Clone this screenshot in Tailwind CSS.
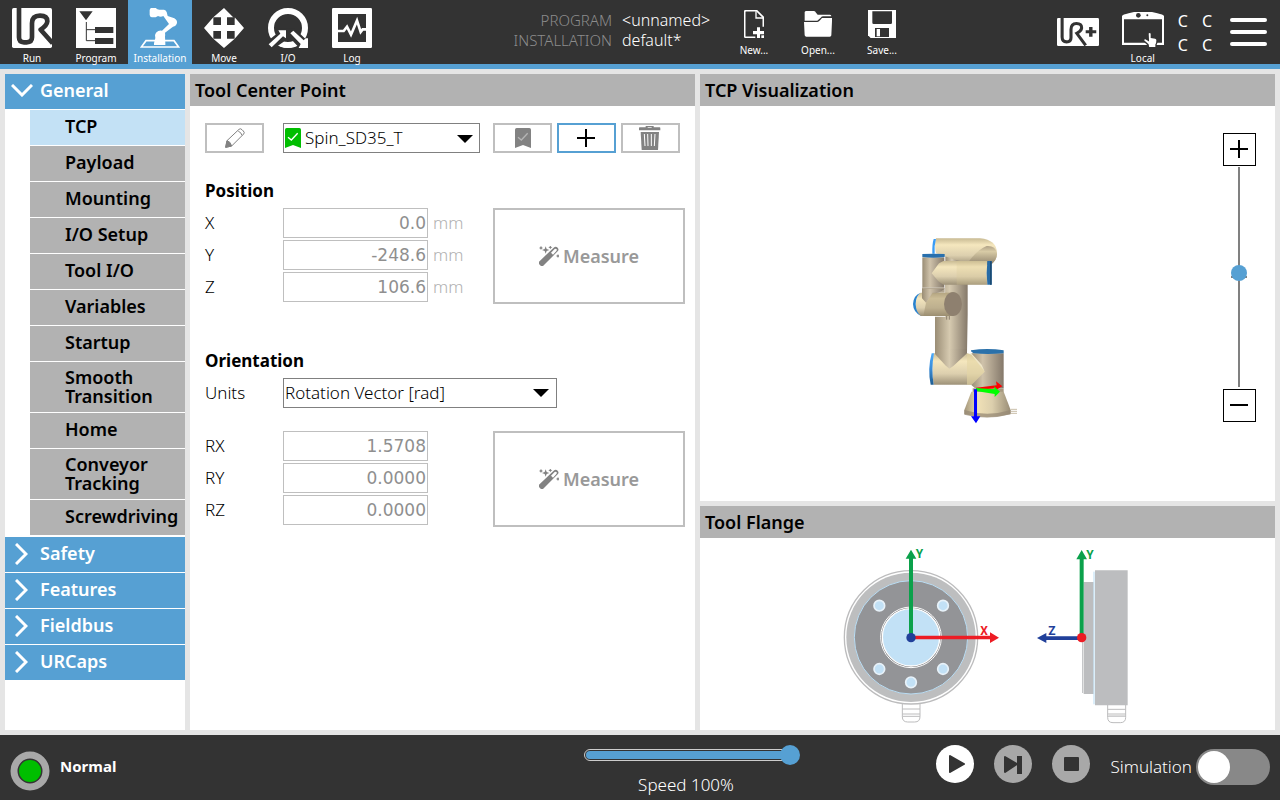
<!DOCTYPE html>
<html lang="en">

<head>
    <meta charset="utf-8">
    <meta name="viewport" content="width=device-width, initial-scale=1.0">
    <script src="https://cdn.jsdelivr.net/npm/@tailwindcss/browser@4"></script>
    <title>Installation - Tool Center Point</title>
</head>

<body class="flex min-h-screen flex-col bg-[#e5e5e5] font-['Noto_Sans','DejaVu_Sans',sans-serif] text-black">

    <!-- shared symbols -->
    <svg class="hidden">
        <symbol id="ur" viewBox="0 0 120 120">
            <rect width="120" height="120" rx="5" fill="#fff"/>
            <path d="M21 -1V88Q21 103 36 103H44Q60 103 60 88V46Q60 23 84 23Q106 23 106 40Q105 52 86 65L122 106" fill="none" stroke="#333" stroke-width="14" stroke-linejoin="round"/>
        </symbol>
        <symbol id="bookmark" viewBox="0 0 48 60">
            <path d="M5 0H43Q48 0 48 5V60L24 51L0 60V5Q0 0 5 0Z" fill="currentColor" stroke="none"/>
            <path d="M9 28L19 36L38 16" fill="none" stroke-width="4"/>
        </symbol>
        <symbol id="wand" viewBox="0 0 60 60">
            <path d="M0 47L44 5Q50 -1 56 5Q61 11 56 16L12 60Q6 62 2 56Q-2 52 0 47Z" fill="#828282"/>
            <path d="M36 20L47 9Q50 7 53 10Q55 12 52 15L42 26Z" fill="#fff"/>
            <path d="M20 1L23 9L31 12L23 15L20 23L17 15L9 12L17 9ZM6 -1L8 4L12 6L8 8L6 12L4 8L0 6L4 4ZM34 -2L36 2L40 4L36 6L34 10L32 6L28 4L32 2ZM57 24L59 28L62 30L59 32L57 36L55 32L51 30L55 28Z" fill="#828282"/>
        </symbol>
        <symbol id="arrow" viewBox="0 0 16 8"><path d="M0 0H16L8 8Z"/></symbol>
    </svg>

    <header class="flex h-[69px] shrink-0 border-b-[5px] border-[#56a0d3] bg-[#333] text-white">
        <nav class="flex text-[10px] leading-3">
            <button class="flex w-16 flex-col items-center pt-2">
                <svg class="size-10"><use href="#ur"/></svg>
                <span class="mt-1">Run</span>
            </button>
            <button class="flex w-16 flex-col items-center pt-2">
                <svg class="size-10" viewBox="0 0 120 120">
                    <path d="M0 0H120V120H0Z" fill="#fff"/>
                    <path d="M10 10H50L30 37Z M57 57H112V75H57Z M57 90H112V108H57Z" fill="#333"/>
                    <path d="M31 42V98H57M31 65H57" fill="none" stroke="#333" stroke-width="3"/>
                </svg>
                <span class="mt-1">Program</span>
            </button>
            <button class="flex w-16 flex-col items-center bg-[#56a0d3] pt-2">
                <svg class="size-10" viewBox="0 0 120 120">
                    <path d="M18 98H102L116 117H4Z" fill="none" stroke="#fff" stroke-width="5"/>
                    <path d="M34 0H47Q52 5 58 5H72Q78 6 80 12L83 24L103 31Q112 36 111 45Q109 54 99 56L75 74Q76 80 75 86L76 106V111H42V106L46 90Q42 82 48 74Q56 66 66 68L87 48L70 24Q62 28 54 24L47 28H35Q29 26 29 20V6Q30 0 34 0Z" fill="#fff"/>
                </svg>
                <span class="mt-1">Installation</span>
            </button>
            <button class="flex w-16 flex-col items-center pt-2">
                <svg class="size-10" viewBox="0 0 120 120">
                    <path d="M60 0L92 32V28L120 60L92 92L60 120L28 92L0 60L28 28Z" fill="#fff"/>
                    <path d="M28 28H51V51H28ZM69 28H92V51H69ZM28 69H51V92H28ZM69 69H92V92H69Z" fill="#333"/>
                </svg>
                <span class="mt-1">Move</span>
            </button>
            <button class="flex w-16 flex-col items-center pt-2">
                <svg class="size-10" viewBox="0 0 120 120">
                    <circle cx="60" cy="60" r="51" fill="none" stroke="#fff" stroke-width="18"/>
                    <path d="M0 98L28 76L24 62H60V92L20 120H0ZM58 62H80L112 92H120V120H94L64 88Z" fill="#333"/>
                    <path d="M2 109L37 77L31 67H54V91L45 85L11 118ZM67 76L76 68L107 97L113 91H120V120H92L98 108Z" fill="#fff"/>
                    <path d="M60 106L76 110L70 119H50L36 115L48 106Z" fill="#fff"/>
                </svg>
                <span class="mt-1">I/O</span>
            </button>
            <button class="flex w-16 flex-col items-center pt-2">
                <svg class="size-10" viewBox="0 0 120 120">
                    <rect width="120" height="120" rx="4" fill="#fff"/>
                    <path d="M18 18H102V102H18Z" fill="#333"/>
                    <path d="M16 69H35L45 56L57 80L75 38L86 72L92 64H104" fill="none" stroke="#fff" stroke-width="8"/>
                </svg>
                <span class="mt-1">Log</span>
            </button>
        </nav>

        <dl class="ml-[128px] grid grid-cols-[100px_90px] content-start gap-x-[10px] pt-[10px] text-base leading-5 font-light">
            <dt class="text-right text-[15px] leading-5 text-[#8c8c8c]">PROGRAM</dt>
            <dd>&lt;unnamed&gt;</dd>
            <dt class="text-right text-[15px] leading-5 text-[#8c8c8c]">INSTALLATION</dt>
            <dd>default*</dd>
        </dl>

        <div class="ml-[10px] flex text-[10px] leading-3">
            <button class="flex w-16 flex-col items-center pt-[10px]">
                <svg class="h-7 w-5" viewBox="0 0 60 84">
                    <path d="M34 82H5Q2 82 2 78V6Q2 2 6 2H38L58 22V50" fill="none" stroke="#fff" stroke-width="5"/>
                    <path d="M36 4V24H57" fill="none" stroke="#fff" stroke-width="4"/>
                    <path d="M39 52H48V63H60V73H48V84H39V73H27V63H39Z" fill="#fff"/>
                    <path d="M52 76H60V84H52Z" fill="#fff"/>
                </svg>
                <span class="mt-[6px]">New...</span>
            </button>
            <button class="flex w-16 flex-col items-center pt-[10px]">
                <svg class="h-7 w-7" viewBox="0 0 84 84">
                    <path d="M2 6Q3 3 7 3H30Q34 3 36 8L41 14H78Q82 14 82 19H58Q53 19 50 23L40 32H2Z" fill="#fff"/>
                    <path d="M0 36H40Q44 36 48 31L54 24H84V34L82 76Q82 80 77 80H7Q3 80 2 76Z" fill="#fff"/>
                </svg>
                <span class="mt-[6px]">Open...</span>
            </button>
            <button class="flex w-16 flex-col items-center pt-[10px]">
                <svg class="h-7 w-7" viewBox="0 0 84 84">
                    <path d="M0 0H84V84H8L0 76Z" fill="#fff"/>
                    <path d="M13 4H72V38Q72 42 68 42H17Q13 42 13 38ZM21 54H63V81H21Z" fill="#333"/>
                    <path d="M26 57H36V79H26Z" fill="#fff"/>
                </svg>
                <span class="mt-[6px]">Save...</span>
            </button>
        </div>

        <div class="ml-auto flex text-[10px] leading-3">
            <button class="mr-3 pt-[18px] pb-[18px]" aria-label="UR+">
                <svg class="h-7 w-[42px]" viewBox="0 0 123 82">
                    <rect width="123" height="82" rx="4" fill="#fff"/>
                    <path d="M15 -1V56Q15 70 28 70Q41 70 41 58V34Q41 16 57 16Q73 16 72 30Q71 38 58 45L84 80" fill="none" stroke="#333" stroke-width="9"/>
                    <path d="M94 26H104V36H115V45H104V55H94V45H84V36H94Z" fill="#333"/>
                </svg>
            </button>
            <button class="flex w-16 flex-col items-center pt-3">
                <svg class="h-9 w-[42px]" viewBox="0 0 126 108">
                    <path d="M0 12Q2 8 20 4L36 0H90L106 4Q124 8 126 12V99H0Z" fill="#fff"/>
                    <path d="M6 22H120V92H6Z" fill="#333"/>
                    <circle cx="49" cy="10" r="7" fill="#333"/><circle cx="76" cy="10" r="3" fill="#333"/>
                    <path d="M78 64Q82 58 88 64V76L100 78Q106 80 105 86Q105 94 102 98V107H80L78 98L65 86Q64 79 71 80L79 85Z" fill="#fff" stroke="#333" stroke-width="4"/>
                </svg>
                <span class="mt-1">Local</span>
            </button>
            <div class="ml-[3px] grid grid-cols-2 content-start gap-x-[14px] pt-[9px] text-base leading-6">
                <span>C</span><span>C</span><span>C</span><span>C</span>
            </div>
            <button class="mr-[13px] ml-[18px] flex flex-col gap-2 self-start pt-[18px]" aria-label="Menu">
                <span class="h-1 w-[37px] rounded-sm bg-white"></span>
                <span class="h-1 w-[37px] rounded-sm bg-white"></span>
                <span class="h-1 w-[37px] rounded-sm bg-white"></span>
            </button>
        </div>
    </header>

    <div class="flex grow gap-[5px] p-[5px]">
        <!-- menu -->
        <aside class="flex w-[180px] shrink-0 flex-col bg-white text-lg leading-[19px] font-semibold">
            <button class="flex h-[35px] items-center bg-[#56a0d3] pb-[2px] pl-[6px] text-left text-white">
                <svg class="mr-[7px] h-[13px] w-[22px]" viewBox="0 0 22 13"><path d="M1 1L11 11L21 1" fill="none" stroke="#fff" stroke-width="3"/></svg>General
            </button>
            <ul class="mt-px mb-[2px] ml-[25px] flex flex-col gap-px text-black">
                <li><a href="#" class="flex h-[35px] items-center bg-[#c3e1f5] pb-[2px] pl-[35px]">TCP</a></li>
                <li><a href="#" class="flex h-[35px] items-center bg-[#b2b2b2] pb-[2px] pl-[35px]">Payload</a></li>
                <li><a href="#" class="flex h-[35px] items-center bg-[#b2b2b2] pb-[2px] pl-[35px]">Mounting</a></li>
                <li><a href="#" class="flex h-[35px] items-center bg-[#b2b2b2] pb-[2px] pl-[35px]">I/O Setup</a></li>
                <li><a href="#" class="flex h-[35px] items-center bg-[#b2b2b2] pb-[2px] pl-[35px]">Tool I/O</a></li>
                <li><a href="#" class="flex h-[35px] items-center bg-[#b2b2b2] pb-[2px] pl-[35px]">Variables</a></li>
                <li><a href="#" class="flex h-[35px] items-center bg-[#b2b2b2] pb-[2px] pl-[35px]">Startup</a></li>
                <li><a href="#" class="flex h-[50px] items-center bg-[#b2b2b2] pl-[35px]">Smooth<br>Transition</a></li>
                <li><a href="#" class="flex h-[35px] items-center bg-[#b2b2b2] pb-[2px] pl-[35px]">Home</a></li>
                <li><a href="#" class="flex h-[50px] items-center bg-[#b2b2b2] pl-[35px]">Conveyor<br>Tracking</a></li>
                <li><a href="#" class="flex h-[35px] items-center bg-[#b2b2b2] pb-[2px] pl-[35px]">Screwdriving</a></li>
            </ul>
            <div class="flex flex-col gap-px text-white">
                <button class="flex h-[35px] items-center bg-[#56a0d3] pb-[2px] pl-[10px] text-left">
                    <svg class="mr-3 h-[22px] w-[13px]" viewBox="0 0 13 22"><path d="M1 1L11 11L1 21" fill="none" stroke="#fff" stroke-width="3"/></svg>Safety
                </button>
                <button class="flex h-[35px] items-center bg-[#56a0d3] pb-[2px] pl-[10px] text-left">
                    <svg class="mr-3 h-[22px] w-[13px]" viewBox="0 0 13 22"><path d="M1 1L11 11L1 21" fill="none" stroke="#fff" stroke-width="3"/></svg>Features
                </button>
                <button class="flex h-[35px] items-center bg-[#56a0d3] pb-[2px] pl-[10px] text-left">
                    <svg class="mr-3 h-[22px] w-[13px]" viewBox="0 0 13 22"><path d="M1 1L11 11L1 21" fill="none" stroke="#fff" stroke-width="3"/></svg>Fieldbus
                </button>
                <button class="flex h-[35px] items-center bg-[#56a0d3] pb-[2px] pl-[10px] text-left">
                    <svg class="mr-3 h-[22px] w-[13px]" viewBox="0 0 13 22"><path d="M1 1L11 11L1 21" fill="none" stroke="#fff" stroke-width="3"/></svg>URCaps
                </button>
            </div>
        </aside>

        <!-- tool center point -->
        <main class="w-[505px] shrink-0 bg-white">
            <h1 class="bg-[#b2b2b2] pl-[5px] text-lg leading-8 font-semibold">Tool Center Point</h1>
            <div class="pt-[17px] pr-[10px] pl-[15px] text-[17px] font-light">
                <div class="flex h-[30px]">
                    <button class="flex w-[59px] items-center justify-center border-2 border-[#bfbfbf]" aria-label="Rename" disabled>
                        <svg class="size-5" viewBox="0 0 60 60" fill="none" stroke="#828282" stroke-width="3">
                            <path d="M6 38L42 4Q46 0 51 5L55 9Q60 14 56 18L20 54L2 58Z"/>
                            <path d="M6 38Q16 40 20 54L2 58Z" fill="#828282"/>
                            <path d="M40 10Q48 12 51 22"/>
                        </svg>
                    </button>
                    <div class="relative ml-[19px] w-[197px]">
                        <select class="h-full w-full appearance-none border border-[#808080] bg-white pl-[21px]" aria-label="TCP">
                            <option>Spin_SD35_T</option>
                        </select>
                        <svg class="pointer-events-none absolute top-[5px] left-[2px] h-5 w-4 stroke-white text-[#00be00]"><use href="#bookmark"/></svg>
                        <svg class="pointer-events-none absolute top-3 right-[7px] h-2 w-4"><use href="#arrow"/></svg>
                    </div>
                    <div class="ml-[13px] flex gap-[5px]">
                        <button class="flex w-[59px] items-center justify-center border-2 border-[#bfbfbf]" aria-label="Set as default" disabled>
                            <svg class="h-5 w-4 stroke-[#b5b5b5] text-[#828282]"><use href="#bookmark"/></svg>
                        </button>
                        <button class="flex w-[59px] items-center justify-center border-2 border-[#56a0d3] pr-px" aria-label="Add">
                            <svg class="size-[18px]" viewBox="0 0 18 18"><path d="M8 0H10V8H18V10H10V18H8V10H0V8H8Z"/></svg>
                        </button>
                        <button class="flex w-[59px] items-center justify-center border-2 border-[#bfbfbf] pr-px" aria-label="Delete" disabled>
                            <svg class="h-6 w-[22px]" viewBox="0 0 66 72">
                                <path d="M2 4H20V0H44V4H62Q64 4 64 7V13H0V7Q0 4 2 4Z" fill="#828282"/>
                                <path d="M26 3H38V5H26Z" fill="#fff"/>
                                <path d="M5 18H60L57 72H8Z" fill="#828282"/>
                                <path d="M16 24L18 60M26 24L27 60M37 24V60M48 24L46 60" stroke="#fff" stroke-width="3"/>
                            </svg>
                        </button>
                    </div>
                </div>

                <h2 class="mt-[26px] text-[17px] leading-6 font-bold">Position</h2>
                <div class="mt-[5px] flex">
                    <div class="grid w-[288px] grid-cols-[78px_145px_auto] content-start items-center gap-y-[2px]">
                        <label for="x">X</label>
                        <input id="x" class="h-[30px] w-full border border-[#bfbfbf] pr-px text-right font-['DejaVu_Sans'] font-normal text-[#8f8f8f]" value="0.0" disabled>
                        <span class="pl-[5px] text-[#b0b0b0]">mm</span>
                        <label for="y">Y</label>
                        <input id="y" class="h-[30px] w-full border border-[#bfbfbf] pr-px text-right font-['DejaVu_Sans'] font-normal text-[#8f8f8f]" value="-248.6" disabled>
                        <span class="pl-[5px] text-[#b0b0b0]">mm</span>
                        <label for="z">Z</label>
                        <input id="z" class="h-[30px] w-full border border-[#bfbfbf] pr-px text-right font-['DejaVu_Sans'] font-normal text-[#8f8f8f]" value="106.6" disabled>
                        <span class="pl-[5px] text-[#b0b0b0]">mm</span>
                    </div>
                    <button class="flex h-24 w-[192px] shrink-0 items-center justify-center gap-1 border-2 border-[#bfbfbf] text-lg font-semibold text-[#999]" disabled>
                        <svg class="size-5 overflow-visible"><use href="#wand"/></svg>Measure
                    </button>
                </div>

                <h2 class="mt-[45px] text-[17px] leading-6 font-bold">Orientation</h2>
                <div class="mt-[5px] flex items-center">
                    <label for="units" class="w-[78px]">Units</label>
                    <div class="relative h-[30px] w-[274px]">
                        <select id="units" class="h-full w-full appearance-none border border-[#808080] bg-white pl-px">
                            <option>Rotation Vector [rad]</option>
                        </select>
                        <svg class="pointer-events-none absolute top-[11px] right-2 h-2 w-4"><use href="#arrow"/></svg>
                    </div>
                </div>
                <div class="mt-[23px] flex">
                    <div class="grid w-[288px] grid-cols-[78px_145px] content-start items-center gap-y-[2px]">
                        <label for="rx">RX</label>
                        <input id="rx" class="h-[30px] w-full border border-[#bfbfbf] pr-px text-right font-['DejaVu_Sans'] font-normal text-[#8f8f8f]" value="1.5708" disabled>
                        <label for="ry">RY</label>
                        <input id="ry" class="h-[30px] w-full border border-[#bfbfbf] pr-px text-right font-['DejaVu_Sans'] font-normal text-[#8f8f8f]" value="0.0000" disabled>
                        <label for="rz">RZ</label>
                        <input id="rz" class="h-[30px] w-full border border-[#bfbfbf] pr-px text-right font-['DejaVu_Sans'] font-normal text-[#8f8f8f]" value="0.0000" disabled>
                    </div>
                    <button class="flex h-24 w-[192px] shrink-0 items-center justify-center gap-1 border-2 border-[#bfbfbf] text-lg font-semibold text-[#999]" disabled>
                        <svg class="size-5 overflow-visible"><use href="#wand"/></svg>Measure
                    </button>
                </div>
            </div>
        </main>

        <div class="flex grow flex-col gap-[5px]">
            <section class="flex grow flex-col bg-white">
                <h2 class="bg-[#b2b2b2] pl-[5px] text-lg leading-8 font-semibold">TCP Visualization</h2>
                <div class="flex grow justify-between pr-[19px] pl-[190px]">
                    <!-- robot arm -->
                    <svg class="mt-[114px] h-[220px] w-[150px]" viewBox="0 0 450 660">
                        <defs>
                            <linearGradient id="h"><stop offset="0" stop-color="#9a8d75"/><stop offset=".45" stop-color="#d6cab0"/><stop offset="1" stop-color="#85796a"/></linearGradient>
                            <linearGradient id="hd"><stop offset="0" stop-color="#9a8d75"/><stop offset=".35" stop-color="#cfc2aa"/><stop offset="1" stop-color="#84786a"/></linearGradient>
                            <linearGradient id="v" x2="0" y2="1"><stop offset="0" stop-color="#c9bb94"/><stop offset=".25" stop-color="#f5e7be"/><stop offset=".65" stop-color="#dccfae"/><stop offset="1" stop-color="#9d9178"/></linearGradient>
                            <linearGradient id="vd" x2="0" y2="1"><stop offset="0" stop-color="#b0a186"/><stop offset=".3" stop-color="#d8cba6"/><stop offset="1" stop-color="#8f826c"/></linearGradient>
                            <linearGradient id="bl" x2="0" y2="1"><stop offset="0" stop-color="#49a9fa"/><stop offset=".5" stop-color="#3a8bd6"/><stop offset="1" stop-color="#1d5c90"/></linearGradient>
                            <linearGradient id="base"><stop offset="0" stop-color="#a3967b"/><stop offset=".3" stop-color="#efe0b6"/><stop offset=".6" stop-color="#dccfad"/><stop offset="1" stop-color="#998d76"/></linearGradient>
                        </defs>
                        <path d="M166 95H210V200H166Z" fill="url(#h)"/>
                        <path d="M165 185H233V285L231 400H135V290H166Z" fill="url(#h)"/>
                        <path d="M138 55H270Q321 60 321 100Q321 124 300 134L205 122L138 100Q132 76 138 55Z" fill="url(#v)"/>
                        <path d="M238 122Q262 90 290 78Q316 76 321 100Q321 124 300 134H238Z" fill="url(#vd)"/>
                        <path d="M131 57H138Q132 77 134 101H127Q126 73 131 57Z" fill="#3a9cf5"/>
                        <path d="M97 112H163V203H97Z" fill="url(#hd)"/>
                        <path d="M97 102Q130 100 164 102V111Q130 115 97 111Z" fill="#286fad"/>
                        <path d="M125 160L147 130L160 123H292Q288 158 292 194H160L145 184Z" fill="url(#v)"/>
                        <path d="M200 123H292Q288 158 292 194H200Z" fill="#d6c693" opacity=".25"/>
                        <path d="M292 123H305V194H292Q288 158 292 123Z" fill="#286ba5"/><path d="M300 124H305V194H300Z" fill="#1b4b73"/>
                        <path d="M96 203H164V218H96Z" fill="#b1a58f"/>
                        <path d="M92 218H190V288H92Q76 278 77 252Q78 227 92 218Z" fill="url(#v)"/>
                        <path d="M96 206H164Q148 220 128 220L108 248L96 235Z" fill="url(#hd)"/>
                        <path d="M108 248L128 218H190V288H100Z" fill="#9a8968" opacity=".45"/>
                        <path d="M92 218Q77 228 77 252Q78 278 93 287Q70 278 69 252Q70 226 92 218Z" fill="#2a82cc"/>
                        <ellipse cx="189" cy="252" rx="27" ry="36" fill="#8e806f"/>
                        <path d="M170 288V299M178 288V299" stroke="#8c806e" stroke-width="3"/>
                        <path d="M131 400H232L245 405L285 455L245 494H131Q123 447 131 400Z" fill="url(#v)"/>
                        <path d="M135 387H231V400L190 438L178 446L166 436L135 402Z" fill="url(#h)"/>
                        <path d="M125 400H132Q123 447 131 494H122Q112 447 125 400Z" fill="url(#bl)"/>
                        <path d="M231 401L262 400L290 455L262 494H231Z" fill="#e5d5a4" opacity=".6"/>
                        <path d="M244 400H341V505H255L244 495L284 455L275 434Z" fill="url(#hd)"/>
                        <path d="M243 391Q292 383 341 391V400Q292 404 250 400L243 394Z" fill="#2b71aa"/>
                        <path d="M248 505H341V517H248Z" fill="#a5987f"/>
                        <path d="M244 515H341L362 570V582Q292 602 223 582V570Z" fill="url(#base)"/>
                        <path d="M223 570Q292 592 362 570V583Q292 602 223 584Z" fill="#978a75" opacity=".75"/>
                        <path d="M362 568H381M362 574H381M362 580H381" stroke="#c9bfa9" stroke-width="3"/>
                        <path d="M258 503L320 496L318 484L337 499L318 510V505L258 510Z" fill="#f00"/>
                        <path d="M258 504L314 508L312 499L330 515L314 531V522L258 513Z" fill="#0f0"/>
                        <path d="M252 508H261V589H271L258 610L243 589H252Z" fill="#00f"/>
                    </svg>
                    <div class="mt-[27px] flex flex-col items-center self-start">
                        <button class="flex size-[33px] items-center justify-center border border-black pr-px pb-px" aria-label="Zoom in">
                            <svg class="size-[18px]" viewBox="0 0 18 18"><path d="M8 0H10V8H18V10H10V18H8V10H0V8H8Z"/></svg>
                        </button>
                        <input type="range" min="0" max="100" value="52" aria-label="Zoom" class="mt-px mr-px mb-[2px] h-[220px] w-4 appearance-none bg-[linear-gradient(#808080,#808080),linear-gradient(#808080,#808080)] bg-[length:2px_100%,16px_2px] bg-center bg-no-repeat [direction:rtl] [writing-mode:vertical-lr] [&::-webkit-slider-thumb]:size-4 [&::-webkit-slider-thumb]:appearance-none [&::-webkit-slider-thumb]:rounded-full [&::-webkit-slider-thumb]:bg-[#56a0d3]">
                        <button class="flex size-[33px] items-center justify-center border border-black pr-px pb-px" aria-label="Zoom out">
                            <svg class="h-[2px] w-[18px]" viewBox="0 0 18 2"><path d="M0 0H18V2H0Z"/></svg>
                        </button>
                    </div>
                </div>
            </section>

            <section class="bg-white">
                <h2 class="bg-[#b2b2b2] pl-[5px] text-lg leading-8 font-semibold">Tool Flange</h2>
                <div class="flex h-48 justify-center pt-[2px]">
                    <svg class="h-[190px] w-[310px]" viewBox="9 0 930 570">
                        <path d="M217 490H270V530Q270 546 254 546H233Q217 546 217 530ZM833 493H887V532Q887 548 871 548H849Q833 548 833 532Z" fill="#fff" stroke="#bcbcbd" stroke-width="3"/>
                        <path d="M217 507H270M217 522H270M217 529H270M833 508H887M833 522H887M833 529H887" stroke="#bcbcbd" stroke-width="3"/>
                        <path d="M835 522H885V529H835Z" fill="#ddd"/>
                        <circle cx="243" cy="292" r="200" fill="#fff" stroke="#bcbcbd" stroke-width="4"/>
                        <circle cx="243" cy="292" r="194" fill="#bdbebf"/>
                        <circle cx="243" cy="292" r="170" fill="#939497" stroke="#b9ddf4" stroke-width="3"/>
                        <circle cx="243" cy="292" r="91" fill="#808184" stroke="#fff" stroke-width="3"/>
                        <circle cx="243" cy="292" r="86" fill="#c2e1f6" stroke="#fff" stroke-width="4"/>
                        <g fill="#c2e1f6" stroke="#e8f2f9" stroke-width="5">
                            <circle cx="148" cy="197" r="16"/><circle cx="339" cy="197" r="16"/>
                            <circle cx="148" cy="387" r="16"/><circle cx="339" cy="387" r="16"/><circle cx="243" cy="427" r="16"/>
                        </g>
                        <path d="M761 126H791V462H761Z M795 91H893V496H795Z" fill="#bcbdbf"/>
                        <path d="M758 294V459" stroke="#bcbdbf" stroke-width="3"/>
                        <path d="M792 95V493" stroke="#b9ddf4" stroke-width="3"/>
                        <path d="M237 292V56H227L243 29L259 56H249V292ZM749 293V58H739L755 30L771 58H761V293Z" fill="#0ba14b"/>
                        <path d="M243 287H480V277L507 293L480 309V298H243Z" fill="#ed1c24"/>
                        <path d="M755 289H649V279L621 294L649 309V300H755Z" fill="#21409a"/>
                        <circle cx="243" cy="293" r="14" fill="#21409a"/><circle cx="755" cy="293" r="14" fill="#ed1c24"/>
                        <g class="font-['Roboto',sans-serif] text-[36px] font-bold">
                            <text x="257" y="55" fill="#0ba14b">Y</text><text x="769" y="56" fill="#0ba14b">Y</text>
                            <text x="451" y="284" fill="#ed1c24">X</text><text x="655" y="284" fill="#21409a">Z</text>
                        </g>
                    </svg>
                </div>
            </section>
        </div>
    </div>

    <footer class="flex h-[65px] shrink-0 items-start justify-between bg-[#333] px-[10px] text-white">
        <div class="flex w-[574px] items-center gap-[10px] pt-4">
            <svg class="size-10" viewBox="0 0 40 40"><circle cx="20" cy="20" r="16" fill="none" stroke="#a8a8a8" stroke-width="7"/><circle cx="20" cy="20" r="11" fill="#00be00"/></svg>
            <span class="pb-[10px] text-[15px] font-bold">Normal</span>
        </div>
        <div class="flex w-[216px] flex-col pt-[10px]">
            <div class="relative flex h-5 items-center">
                <span class="absolute top-1 right-2 left-0 h-3 rounded-full border border-[#ccc]"></span>
                <input id="speed" type="range" min="0" max="100" value="100" class="relative h-2 w-full appearance-none bg-transparent before:absolute before:inset-y-0 before:right-2 before:left-[2px] before:rounded-full before:bg-[#56a0d3] [&::-webkit-slider-thumb]:relative [&::-webkit-slider-thumb]:size-5 [&::-webkit-slider-thumb]:appearance-none [&::-webkit-slider-thumb]:rounded-full [&::-webkit-slider-thumb]:bg-[#56a0d3]">
            </div>
            <label for="speed" class="mt-2 pr-3 text-center text-[17px] leading-6 font-light">Speed 100%</label>
        </div>
        <div class="ml-auto flex pt-[10px]">
            <button class="mr-5 size-[38px] rounded-full bg-white" aria-label="Play">
                <svg class="size-[38px]" viewBox="0 0 38 38"><path d="M14 11L28 19L14 27Z" fill="#333" stroke="#333" stroke-width="2" stroke-linejoin="round"/></svg>
            </button>
            <button class="mr-5 size-[38px] rounded-full bg-[#a8a8a8]" aria-label="Step">
                <svg class="size-[38px]" viewBox="0 0 38 38"><path d="M11 12L23 19L11 27Z" fill="#333" stroke="#333" stroke-width="2" stroke-linejoin="round"/><path d="M23 11H28V29H23Z" fill="#333"/></svg>
            </button>
            <button class="mr-5 size-[38px] rounded-full bg-[#a8a8a8]" aria-label="Stop">
                <svg class="size-[38px]" viewBox="0 0 38 38"><rect x="12" y="12" width="15" height="14" rx="1" fill="#333"/></svg>
            </button>
            <label class="flex items-center gap-1 pt-1 text-[17px] font-light">Simulation
                <input type="checkbox" role="switch" class="relative h-9 w-[74px] appearance-none rounded-full bg-[#888] before:absolute before:top-[2px] before:left-[2px] before:size-8 before:rounded-full before:bg-white">
            </label>
        </div>
    </footer>
</body>

</html>
